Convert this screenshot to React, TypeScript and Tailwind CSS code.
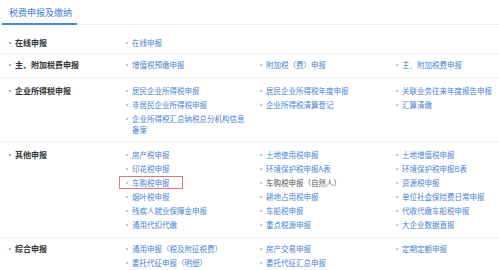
import React from "react";

type Item = { t: string; dark?: boolean; boxed?: boolean };

const sections: { label: string; rows: Item[][] ; pt: string; pb: string }[] = [
  { label: "在线申报", rows: [[{ t: "在线申报" }]], pt: "pt-[12px]", pb: "pb-[5px]" },
  {
    label: "主、附加税费申报",
    rows: [[{ t: "增值税预缴申报" }, { t: "附加税（费）申报" }, { t: "主、附加税费申报" }]],
    pt: "pt-[5px]",
    pb: "pb-[7px]",
  },
  {
    label: "企业所得税申报",
    rows: [
      [{ t: "居民企业所得税申报" }, { t: "居民企业所得税年度申报" }, { t: "关联业务往来年度报告申报" }],
      [{ t: "非居民企业所得税申报" }, { t: "企业所得税清算登记" }, { t: "汇算清缴" }],
      [{ t: "企业所得税汇总纳税总分机构信息备案" }],
    ],
    pt: "pt-[7px]",
    pb: "pb-[6px]",
  },
  {
    label: "其他申报",
    rows: [
      [{ t: "房产税申报" }, { t: "土地使用税申报" }, { t: "土地增值税申报" }],
      [{ t: "印花税申报" }, { t: "环境保护税申报A表" }, { t: "环境保护税申报B表" }],
      [{ t: "车购税申报", boxed: true }, { t: "车购税申报（自然人）", dark: true }, { t: "资源税申报" }],
      [{ t: "烟叶税申报" }, { t: "耕地占用税申报" }, { t: "单位社会保险费日常申报" }],
      [{ t: "残疾人就业保障金申报" }, { t: "车船税申报" }, { t: "代收代缴车船税申报" }],
      [{ t: "通用代扣代缴" }, { t: "重点税源申报" }, { t: "大企业数据直报" }],
    ],
    pt: "pt-[7px]",
    pb: "pb-[7px]",
  },
  {
    label: "综合申报",
    rows: [
      [{ t: "通用申报（税及附征税费）" }, { t: "房产交易申报" }, { t: "定期定额申报" }],
      [{ t: "委托代征申报（明细）" }, { t: "委托代征汇总申报" }],
    ],
    pt: "pt-[5px]",
    pb: "pb-[3px]",
  },
];

function Link({ item }: { item: Item }) {
  return (
    <div className="relative flex items-start">
      {item.boxed && (
        <div className="absolute left-[-7px] top-[-1px] w-[64px] h-[13px] border border-[#e07a7a]" />
      )}
      <span className="mt-[5px] w-[2px] h-[2px] rounded-full bg-[#b5b5b5] shrink-0" />
      <span
        className={
          "ml-[4px] leading-[11px] " +
          (item.dark ? "text-[#555555]" : "text-[#4a7fd0]")
        }
      >
        {item.t}
      </span>
    </div>
  );
}

export default function App() {
  return (
    <div
      className="w-[499px] h-[270px] bg-white overflow-hidden"
      style={{ fontFamily: '"Noto Sans CJK SC", "Noto Sans", sans-serif' }}
    >
      <div className="h-[25px] border-b border-[#ececec] relative">
        <div className="absolute left-[2px] bottom-[-1px] w-[75px] h-[2px] bg-[#4a86dc]" />
        <div className="pl-[9px] pt-[7px] text-[9px] leading-[12px] text-[#3f7fd8]">税费申报及缴纳</div>
      </div>
      {sections.map((s, i) => (
        <div
          key={i}
          className={
            "flex text-[7.5px] " +
            s.pt +
            " " +
            s.pb +
            (i < sections.length - 1 ? " border-b border-[#f0f0f0]" : "")
          }
        >
          <div className="w-[126px] pl-[9px] flex items-start shrink-0">
            <span className="mt-[5px] w-[2px] h-[2px] rounded-full bg-[#9a9a9a] shrink-0" />
            <span className="ml-[4px] font-bold text-[8px] leading-[11px] text-[#333333]">{s.label}</span>
          </div>
          <div className="flex flex-col gap-y-[3px]">
            {s.rows.map((r, j) => (
              <div key={j} className="grid grid-cols-[134px_136px_120px]">
                {r.map((it, k) => (
                  <div key={k} className={r.length === 1 && it.t.length > 12 ? "w-[122px]" : ""}>
                    <Link item={it} />
                  </div>
                ))}
              </div>
            ))}
          </div>
        </div>
      ))}
    </div>
  );
}
